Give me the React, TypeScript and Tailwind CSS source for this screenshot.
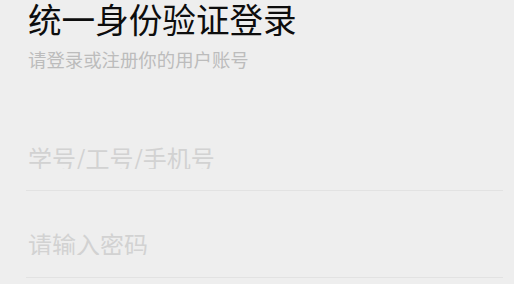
import React from "react";

export default function App() {
  return (
    <div className="w-[514px] h-[284px] overflow-hidden bg-[#eeeeee] font-['Noto_Sans_CJK_SC','Noto_Sans',sans-serif]">
      <div className="pl-7">
        <h1 className="text-[33.6px] leading-[38px] font-normal text-[#0d0d0d]">统一身份验证登录</h1>
        <p className="mt-[12px] text-[18.4px] leading-[18px] text-[#bcbcbc]">请登录或注册你的用户账号</p>
      </div>
      <form className="ml-[26px] w-[477px] mt-[57px]">
        <div className="pt-[20px] pb-[21px] border-b border-[#e2e2e2]">
          <input
            type="text"
            placeholder="学号/工号/手机号"
            className="block w-full pl-[2px] bg-transparent outline-none text-[24px] leading-[24px] h-[24px] text-[#333] placeholder:text-[#d2d2d2]"
          />
        </div>
        <div className="pt-[40px] pb-[22px] border-b border-[#e2e2e2]">
          <input
            type="password"
            placeholder="请输入密码"
            className="block w-full pl-[2px] bg-transparent outline-none text-[24px] leading-[24px] h-[24px] text-[#333] placeholder:text-[#d2d2d2]"
          />
        </div>
      </form>
    </div>
  );
}
